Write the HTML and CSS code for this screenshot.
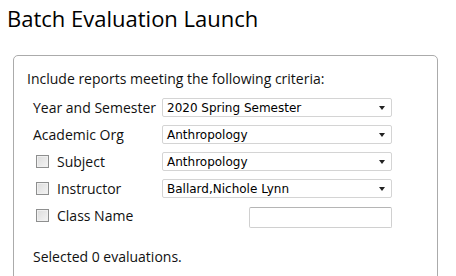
FILE: index.html
```html
<!DOCTYPE html>
<html lang="en">
<head>
    <meta charset="UTF-8">
    <title>Batch Evaluation Launch</title>
    <link rel="stylesheet" href="styles.css">
</head>
<body>
    <h1 class="title">Batch Evaluation Launch</h1>
    <div class="panel">
        <p class="intro">Include reports meeting the following criteria:</p>
        <div class="criteria">
            <div class="row">
                <span class="label">Year and Semester</span>
                <div class="select"><span>2020 Spring Semester</span><i class="arrow"></i></div>
            </div>
            <div class="row">
                <span class="label">Academic Org</span>
                <div class="select"><span>Anthropology</span><i class="arrow"></i></div>
            </div>
            <div class="row">
                <span class="label"><b class="check"></b>Subject</span>
                <div class="select"><span>Anthropology</span><i class="arrow"></i></div>
            </div>
            <div class="row">
                <span class="label"><b class="check"></b>Instructor</span>
                <div class="select"><span>Ballard,Nichole Lynn</span><i class="arrow"></i></div>
            </div>
            <div class="row">
                <span class="label"><b class="check"></b>Class Name</span>
                <div class="field"><input type="text" class="classname"></div>
            </div>
        </div>
        <p class="count">Selected 0 evaluations.</p>
    </div>
</body>
</html>
```

FILE: styles.css
```css
body {
    margin: 0;
    font-family: "Open Sans", "Noto Sans", sans-serif;
    color: #111;
    background: #fff;
    overflow: hidden;
}
.title {
    font-weight: normal;
    font-size: 22px;
    line-height: 32px;
    margin: 2px 0 0 7px;
    color: #000;
}
.panel {
    margin: 21px 0 0 13px;
    width: 425px;
    height: 228px;
    border: 1px solid #ababab;
    border-radius: 5px;
    padding: 13px 0 0 13px;
    box-sizing: border-box;
}
.intro, .count {
    margin: 0;
    font-size: 14px;
    line-height: 20px;
}
.criteria {
    margin: 5px 0 0 6px;
}
.row {
    display: grid;
    grid-template-columns: 129px 230px;
    align-items: center;
    height: 27px;
}
.label {
    display: flex;
    align-items: center;
    font-size: 14px;
}
.check {
    display: inline-block;
    width: 13px;
    height: 13px;
    box-sizing: border-box;
    border: 1px solid #8e8f8f;
    background: linear-gradient(135deg, #dcdcdc, #f4f4f4);
    box-shadow: inset 0 0 0 1px #f0f0f0;
    margin: 0 8px 0 3px;
}
.select {
    height: 19px;
    border: 1px solid #d4d4d4;
    border-radius: 2px;
    box-sizing: border-box;
    display: flex;
    align-items: center;
    justify-content: space-between;
    padding: 0 6px 0 4px;
    font-family: "DejaVu Sans", sans-serif;
    font-size: 12px;
    color: #000;
}
.arrow {
    width: 0;
    height: 0;
    border-left: 3.5px solid transparent;
    border-right: 3.5px solid transparent;
    border-top: 4px solid #222;
}
.field {
    display: flex;
    justify-content: flex-end;
}
.classname {
    width: 143px;
    height: 21px;
    box-sizing: border-box;
    border: 1px solid #d0d0d0;
    border-top-color: #b5b5b5;
    border-radius: 2px;
    margin: 3px 0 0;
}
.count {
    margin: 18px 0 0 6px;
}
```
